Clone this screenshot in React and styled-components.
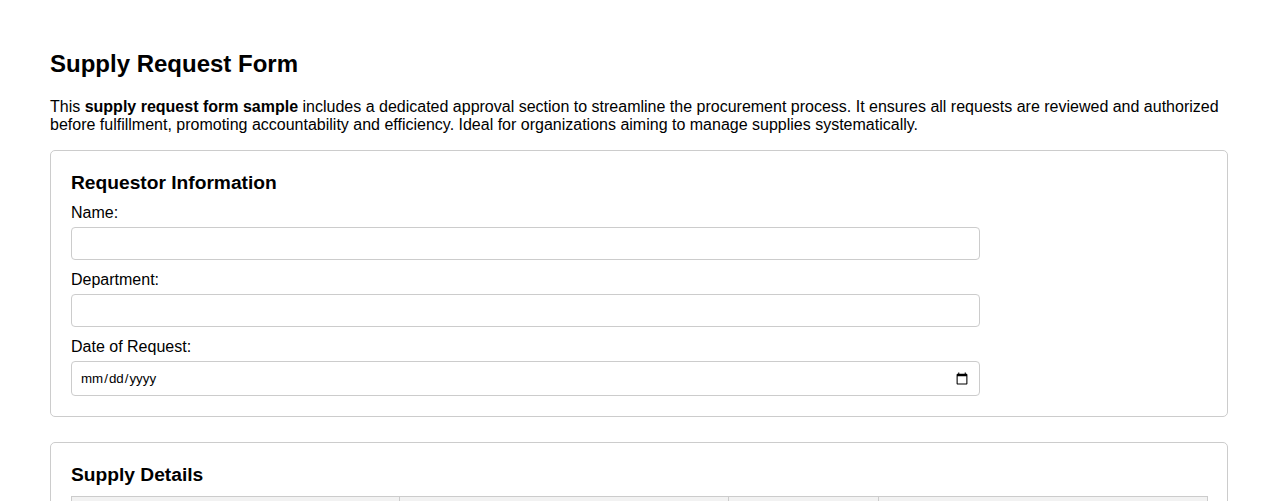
import React from "react";
import styled, { createGlobalStyle } from "styled-components";

const GlobalStyle = createGlobalStyle`
  html, body {
    margin: 0;
    padding: 0;
    background: #ffffff;
  }
  body {
    font-family: "Liberation Sans", Arial, sans-serif;
    color: #000000;
    font-size: 16px;
  }
`;

const Page = styled.div`
  padding: 50px;
`;

const Title = styled.h1`
  font-size: 24px;
  font-weight: bold;
  margin: 0 0 20px;
`;

const Intro = styled.p`
  margin: 0 0 16px;
  font-size: 16px;
`;

const Section = styled.section`
  border: 1px solid #ccc;
  border-radius: 5px;
  padding: 20px;
  margin-bottom: 25px;
`;

const SectionTitle = styled.h2`
  font-size: 1.2em;
  line-height: 23px;
  font-weight: bold;
  margin: 0 0 10px;
`;

const Field = styled.div`
  & + & {
    margin-top: 11px;
  }
`;

const Label = styled.label`
  display: block;
  margin-bottom: 5px;
`;

const Input = styled.input`
  display: block;
  box-sizing: border-box;
  width: 80%;
  padding: 8px;
  border: 1px solid #ccc;
  border-radius: 4px;
  font-family: "Liberation Sans", Arial, sans-serif;
  font-size: 13.333px;
  margin: 0;
  background: #fff;
`;

const Table = styled.table`
  width: 100%;
  border-collapse: collapse;
  table-layout: fixed;
`;

const Th = styled.th`
  border: 1px solid #ccc;
  background: #f2f2f2;
  padding: 8px;
  text-align: left;
  font-weight: bold;
`;

const Td = styled.td`
  border: 1px solid #ccc;
  padding: 8px;
`;

const CellInput = styled.input`
  box-sizing: border-box;
  width: 100%;
  padding: 6px;
  border: 1px solid #ccc;
  border-radius: 4px;
`;

const fields = [
  { id: "name", label: "Name:", type: "text" },
  { id: "department", label: "Department:", type: "text" },
  { id: "date", label: "Date of Request:", type: "date" },
];

const columns = [
  { name: "Item Description", width: 328 },
  { name: "Purpose", width: 329 },
  { name: "Quantity", width: 150 },
  { name: "Notes", width: 329 },
];

export default function App() {
  return (
    <>
      <GlobalStyle />
      <Page>
        <Title>Supply Request Form</Title>
        <Intro>
          This <strong>supply request form sample</strong> includes a dedicated
          approval section to streamline the procurement process. It ensures all
          requests are reviewed and authorized before fulfillment, promoting
          accountability and efficiency. Ideal for organizations aiming to manage
          supplies systematically.
        </Intro>

        <Section>
          <SectionTitle>Requestor Information</SectionTitle>
          {fields.map((f) => (
            <Field key={f.id}>
              <Label htmlFor={f.id}>{f.label}</Label>
              <Input id={f.id} type={f.type} />
            </Field>
          ))}
        </Section>

        <Section>
          <SectionTitle>Supply Details</SectionTitle>
          <Table>
            <colgroup>
              {columns.map((c) => (
                <col key={c.name} style={{ width: c.width }} />
              ))}
            </colgroup>
            <thead>
              <tr>
                {columns.map((c) => (
                  <Th key={c.name}>{c.name}</Th>
                ))}
              </tr>
            </thead>
            <tbody>
              {[0, 1, 2].map((r) => (
                <tr key={r}>
                  {columns.map((c) => (
                    <Td key={c.name}>
                      <CellInput type={c.name === "Quantity" ? "number" : "text"} />
                    </Td>
                  ))}
                </tr>
              ))}
            </tbody>
          </Table>
        </Section>
      </Page>
    </>
  );
}
